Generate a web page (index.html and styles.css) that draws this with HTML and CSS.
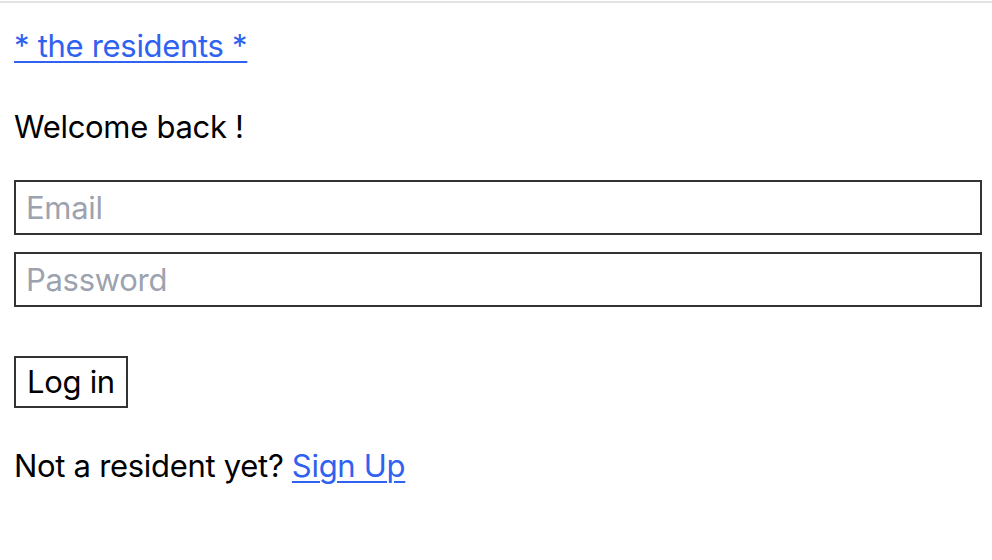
FILE: index.html
```html
<!DOCTYPE html>
<html lang="en">
<head>
<meta charset="utf-8">
<title>the residents</title>
<link rel="stylesheet" href="styles.css">
</head>
<body>
<div class="topline"></div>
<main class="page">
  <a class="brand" href="#">* the residents *</a>
  <p class="welcome">Welcome back !</p>
  <form class="form">
    <input class="field field-email" type="email" placeholder="Email">
    <input class="field field-password" type="password" placeholder="Password">
    <button class="btn" type="button">Log in</button>
  </form>
  <p class="signup">Not a resident yet? <a class="link" href="#">Sign Up</a></p>
</main>
</body>
</html>
```

FILE: styles.css
```css
html, body {
  margin: 0;
  padding: 0;
  background: #fff;
}
body {
  font-family: Inter, "Noto Sans", "Liberation Sans", sans-serif;
  font-size: 31px;
  letter-spacing: -0.3px;
  line-height: 40px;
  color: #000;
}
.topline {
  margin-top: 1px;
  height: 2px;
  background: #e3e3e3;
}
.page {
  display: flex;
  flex-direction: column;
  align-items: flex-start;
  padding: 0 10px 0 14px;
}
.brand, .link {
  color: #2f62f0;
  text-decoration: underline;
  text-decoration-thickness: 2px;
  text-underline-offset: 4px;
}
.brand {
  margin-top: 23px;
  display: block;
  height: 40px;
}
.welcome {
  margin: 41px 0 0;
}
.form {
  display: flex;
  flex-direction: column;
  align-items: flex-start;
  align-self: stretch;
  margin-top: 33px;
}
.field {
  box-sizing: border-box;
  width: 968px;
  height: 55px;
  border: 2px solid #333;
  border-radius: 0;
  padding: 0 10px;
  font: inherit;
  letter-spacing: inherit;
  color: #000;
  background: #fff;
  outline: none;
}
.field::placeholder {
  color: #9ca3af;
  opacity: 1;
}
.field-password {
  margin-top: 17px;
}
.btn {
  box-sizing: border-box;
  margin-top: 49px;
  height: 52px;
  padding: 0 11px;
  border: 2px solid #333;
  border-radius: 0;
  background: #fff;
  color: #000;
  font: inherit;
  letter-spacing: inherit;
  line-height: 48px;
}
.signup {
  margin: 38px 0 0;
}
```
